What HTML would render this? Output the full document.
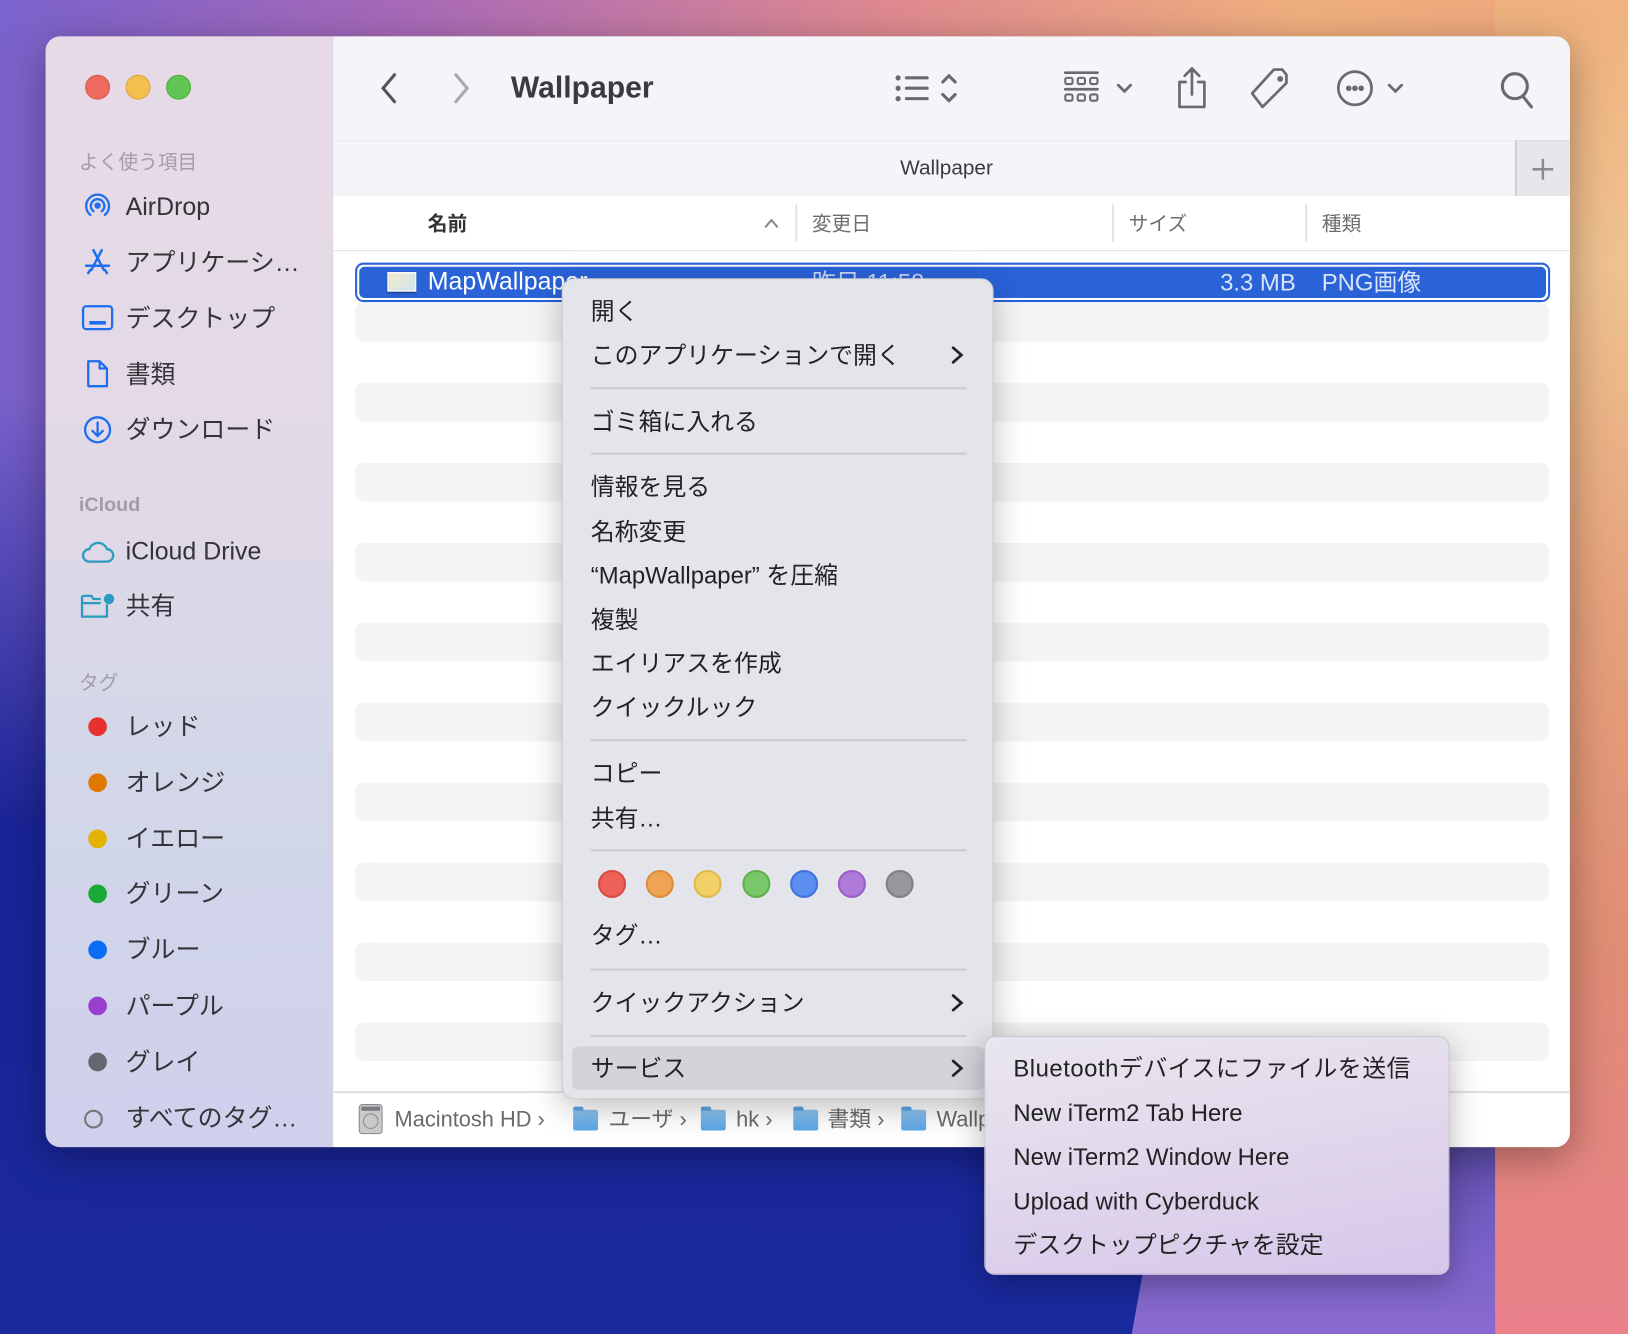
<!DOCTYPE html>
<html><head><meta charset="utf-8">
<style>
*{margin:0;padding:0;box-sizing:border-box}
html,body{width:1628px;height:1334px;overflow:hidden}
body{font-family:"Liberation Sans","Noto Sans CJK JP",sans-serif;}
#s{position:absolute;left:0;top:0;width:1568px;height:1285px;transform:scale(1.03827,1.03813);transform-origin:0 0;overflow:hidden;
background:
linear-gradient(180deg,rgba(0,0,0,0) 0,rgba(0,0,0,0) 380px,rgba(25,35,150,1) 800px,#1a2a9e 100%),
linear-gradient(90deg,#7a62cc 0,#a86ab8 25%,#e08a90 55%,#f0b07e 80%,#eea57e 100%);}
.a{position:absolute}
.win{left:44px;top:35px;width:1468px;height:1070px;border-radius:14px;overflow:hidden;background:#fff;box-shadow:0 10px 40px rgba(0,0,0,.35)}
.side{left:0;top:0;width:277px;height:1070px;background:linear-gradient(180deg,#e7dae6 0,#e2d9e7 40%,#d2d7e8 65%,#cfd0ec 100%);border-right:1px solid #d5d0da}
.tl{width:24px;height:24px;border-radius:50%;top:37px}
.sh{font-size:19px;color:#a39da8;left:32px}
.si{font-size:24px;color:#333338;left:77px;line-height:30px}
.dot{width:18px;height:18px;border-radius:50%;left:41px}
.main{left:277px;top:0;width:1191px;height:1070px}
.tb{left:0;top:0;width:1191px;height:154px;background:#f5f4f8;border-bottom:1px solid #dcdbe0}
.hd{font-size:19px;color:#6d6d72;top:166px}
.stripe{left:21px;width:1150px;height:37px;border-radius:8px;background:#f3f4f4}
.menu{left:541px;top:268px;width:416px;height:791px;background:#e4e5ea;border-radius:12px;border:1px solid #c9c9cf;box-shadow:0 8px 30px rgba(0,0,0,.25)}
.mi{left:27px;font-size:23px;color:#222;line-height:30px}
.sep{left:27px;width:362px;height:2px;background:#cbcbd0}
.cd{width:27px;height:27px;border-radius:50%;top:569px}
.sub{left:948px;top:998px;width:448px;height:230px;border-radius:10px;background:linear-gradient(170deg,#e9e6ee 0,#e2d9ec 45%,#d6c6ea 100%);border:1px solid #c9c4d6;box-shadow:0 8px 30px rgba(0,0,0,.3);overflow:hidden}
.su{left:27px;font-size:23px;color:#222;line-height:30px}
.pb{font-size:21px;color:#6a6a6e;top:1030px;line-height:28px}
.fold{width:24px;height:20px;border-radius:2px;background:linear-gradient(#8ec4ef,#5aa4e6);top:1034px}
.fold:before{content:"";position:absolute;left:0;top:-3px;width:10px;height:4px;background:#5aa4e6;border-radius:2px 2px 0 0}
</style></head><body><div id="s">
<div class="a" style="left:1090px;top:1080px;width:370px;height:205px;background:linear-gradient(180deg,#5a4aa8,#7a62c8 60%,#8a6ad0);clip-path:polygon(10% 0,95% 0,100% 100%,0 100%)"></div>
<div class="a" style="left:1440px;top:0;width:128px;height:1285px;background:linear-gradient(180deg,#f0b27e 0,#efc290 20%,#e6a27c 45%,#e08e74 70%,#e9808a 100%)"></div>
<div class="a win">
 <div class="a side">
  <div class="a tl" style="left:38px;background:#ee6a5f;border:1px solid #d9564c"></div>
  <div class="a tl" style="left:77px;background:#f5bf4f;border:1px solid #dca43a"></div>
  <div class="a tl" style="left:116px;background:#61c554;border:1px solid #4aad3f"></div>
  <div class="a sh" style="top:107px">よく使う項目</div>
  <svg class="a" style="left:36px;top:149px" width="28" height="30" viewBox="0 0 28 30" fill="none" stroke="#1e6ef0" stroke-width="2.2" stroke-linecap="round"><path d="M7 23A11 11 0 1 1 21 23"/><path d="M10 19.5A6.5 6.5 0 1 1 18 19.5"/><circle cx="14" cy="14" r="2" fill="#1e6ef0"/></svg>
  <div class="a si" style="top:150px">AirDrop</div>
  <svg class="a" style="left:36px;top:203px" width="28" height="28" viewBox="0 0 28 28" fill="none" stroke="#1e6ef0" stroke-width="2.4" stroke-linecap="round"><path d="M10 3L20 22M18 3L8 22M3 18H25M5 25L7 22M23 25L21 22"/></svg>
  <div class="a si" style="top:204px">アプリケーシ…</div>
  <svg class="a" style="left:34px;top:258px" width="32" height="26" viewBox="0 0 32 26" fill="none" stroke="#1e6ef0" stroke-width="2.2"><rect x="2" y="2" width="28" height="22" rx="3"/><path d="M8 18H24" stroke-width="3.5"/></svg>
  <div class="a si" style="top:258px">デスクトップ</div>
  <svg class="a" style="left:38px;top:310px" width="24" height="30" viewBox="0 0 24 30" fill="none" stroke="#1e6ef0" stroke-width="2.2" stroke-linejoin="round"><path d="M3 3H14L21 10V27H3Z"/><path d="M14 3V10H21"/></svg>
  <div class="a si" style="top:312px">書類</div>
  <svg class="a" style="left:36px;top:365px" width="28" height="28" viewBox="0 0 28 28" fill="none" stroke="#1e6ef0" stroke-width="2.2" stroke-linecap="round"><circle cx="14" cy="14" r="12"/><path d="M14 7V20M9 15L14 20L19 15"/></svg>
  <div class="a si" style="top:365px">ダウンロード</div>
  <div class="a sh" style="top:441px;font-weight:bold">iCloud</div>
  <svg class="a" style="left:33px;top:484px" width="34" height="24" viewBox="0 0 34 24" fill="none" stroke="#2a9cbf" stroke-width="2.2"><path d="M9 22H26A6 6 0 0 0 26 10A9 9 0 0 0 9 10A6 6 0 0 0 9 22Z"/></svg>
  <div class="a si" style="top:482px">iCloud Drive</div>
  <svg class="a" style="left:33px;top:534px" width="34" height="28" viewBox="0 0 34 28" fill="none" stroke="#2a9cbf" stroke-width="2.2"><path d="M2 5V25H26V13M2 5H11L13 8H20M2 12H20"/><circle cx="28" cy="8" r="5" fill="#2a9cbf" stroke="none"/></svg>
  <div class="a si" style="top:535px">共有</div>
  <div class="a sh" style="top:608px">タグ</div>
  <div class="a dot" style="top:656px;background:#e8312f"></div><div class="a si" style="top:651px">レッド</div>
  <div class="a dot" style="top:710px;background:#e07800"></div><div class="a si" style="top:705px">オレンジ</div>
  <div class="a dot" style="top:764px;background:#e4b200"></div><div class="a si" style="top:759px">イエロー</div>
  <div class="a dot" style="top:817px;background:#1aa936"></div><div class="a si" style="top:812px">グリーン</div>
  <div class="a dot" style="top:871px;background:#0a6cf5"></div><div class="a si" style="top:866px">ブルー</div>
  <div class="a dot" style="top:925px;background:#9a3ed0"></div><div class="a si" style="top:920px">パープル</div>
  <div class="a dot" style="top:979px;background:#67676f"></div><div class="a si" style="top:974px">グレイ</div>
  <svg class="a" style="left:36px;top:1033px" width="28" height="20" viewBox="0 0 28 20" fill="none" stroke="#777" stroke-width="2"><circle cx="10" cy="10" r="8"/><path d="M14 3A8 8 0 0 1 14 17"/></svg>
  <div class="a si" style="top:1028px">すべてのタグ…</div>
 </div>
 <div class="a main">
  <div class="a tb">
   <svg class="a" style="left:43px;top:34px" width="22" height="32" viewBox="0 0 22 32" fill="none" stroke="#555" stroke-width="3" stroke-linecap="round"><path d="M16 3L5 16L16 29"/></svg>
   <svg class="a" style="left:112px;top:34px" width="22" height="32" viewBox="0 0 22 32" fill="none" stroke="#aaa" stroke-width="3" stroke-linecap="round"><path d="M6 3L17 16L6 29"/></svg>
   <div class="a" style="left:171px;top:34px;font-size:29px;font-weight:bold;color:#3b3b3f">Wallpaper</div>
   <svg class="a" style="left:540px;top:34px" width="80" height="34" viewBox="0 0 80 34" fill="none" stroke="#6a6a6e" stroke-width="3" stroke-linecap="round"><circle cx="4" cy="6" r="1" fill="#6a6a6e"/><circle cx="4" cy="16" r="1" fill="#6a6a6e"/><circle cx="4" cy="26" r="1" fill="#6a6a6e"/><path d="M12 6H32M12 16H32M12 26H32M47 10L53 4L59 10M47 22L53 28L59 22"/></svg>
   <svg class="a" style="left:702px;top:32px" width="80" height="38" viewBox="0 0 80 38" fill="none" stroke="#6a6a6e" stroke-width="2.6" stroke-linecap="round"><path d="M3 3H34M3 19H34"/><rect x="3" y="8" width="7" height="6" rx="1.5" stroke-width="2"/><rect x="15" y="8" width="7" height="6" rx="1.5" stroke-width="2"/><rect x="27" y="8" width="7" height="6" rx="1.5" stroke-width="2"/><rect x="3" y="24" width="7" height="6" rx="1.5" stroke-width="2"/><rect x="15" y="24" width="7" height="6" rx="1.5" stroke-width="2"/><rect x="27" y="24" width="7" height="6" rx="1.5" stroke-width="2"/><path d="M54 15L60 21L66 15"/></svg>
   <svg class="a" style="left:810px;top:28px" width="34" height="44" viewBox="0 0 34 44" fill="none" stroke="#6a6a6e" stroke-width="2.6" stroke-linecap="round" stroke-linejoin="round"><path d="M11 16H5V40H29V16H23M17 28V3M10 10L17 3L24 10"/></svg>
   <svg class="a" style="left:881px;top:28px" width="44" height="44" viewBox="0 0 44 44" fill="none" stroke="#6a6a6e" stroke-width="2.6" stroke-linejoin="round"><path d="M25 4H33L37 9V17L14 40L4 27Z"/><circle cx="31" cy="13" r="1.5" fill="#6a6a6e"/></svg>
   <svg class="a" style="left:964px;top:30px" width="80" height="40" viewBox="0 0 80 40" fill="none" stroke="#6a6a6e" stroke-width="2.6" stroke-linecap="round"><circle cx="20" cy="20" r="16"/><circle cx="14" cy="20" r="1.4" fill="#6a6a6e"/><circle cx="20" cy="20" r="1.4" fill="#6a6a6e"/><circle cx="26" cy="20" r="1.4" fill="#6a6a6e"/><path d="M53 17L59 23L65 17"/></svg>
   <svg class="a" style="left:1122px;top:32px" width="38" height="40" viewBox="0 0 38 40" fill="none" stroke="#6a6a6e" stroke-width="3" stroke-linecap="round"><circle cx="16" cy="16" r="12"/><path d="M24 26L32 36"/></svg>
   <div class="a" style="left:0;top:100px;width:1138px;height:54px;background:#f5f4f8;border-top:1px solid #e8e7ec"></div>
   <div class="a" style="left:546px;top:116px;font-size:20px;color:#3b3b3f">Wallpaper</div>
   <div class="a" style="left:1138px;top:100px;width:53px;height:54px;background:#e7e6eb;border-left:2px solid #cfcfd4;border-top:1px solid #dcdbe0"></div>
   <svg class="a" style="left:1153px;top:116px" width="24" height="24" viewBox="0 0 24 24" stroke="#8a8a8e" stroke-width="2.4"><path d="M12 2V22M2 12H22"/></svg>
  </div>
  <div class="a" style="left:0;top:154px;width:1191px;height:53px;background:#fff;border-bottom:1px solid #e1e1e3"></div>
  <div class="a hd" style="left:91px;color:#333;font-weight:bold">名前</div>
  <svg class="a" style="left:414px;top:174px" width="16" height="12" viewBox="0 0 16 12" fill="none" stroke="#888" stroke-width="2"><path d="M2 10L8 3L14 10"/></svg>
  <div class="a" style="left:445px;top:162px;width:2px;height:36px;background:#e3e3e5"></div>
  <div class="a hd" style="left:461px">変更日</div>
  <div class="a" style="left:750px;top:162px;width:2px;height:36px;background:#e3e3e5"></div>
  <div class="a hd" style="left:766px">サイズ</div>
  <div class="a" style="left:936px;top:162px;width:2px;height:36px;background:#e3e3e5"></div>
  <div class="a hd" style="left:952px">種類</div>
  <div class="a stripe" style="top:257px"></div>
  <div class="a stripe" style="top:334px"></div>
  <div class="a stripe" style="top:411px"></div>
  <div class="a stripe" style="top:488px"></div>
  <div class="a stripe" style="top:565px"></div>
  <div class="a stripe" style="top:642px"></div>
  <div class="a stripe" style="top:719px"></div>
  <div class="a stripe" style="top:796px"></div>
  <div class="a stripe" style="top:873px"></div>
  <div class="a stripe" style="top:950px"></div>
  <div class="a" style="left:21px;top:218px;width:1151px;height:38px;border-radius:8px;border:2px solid #2a62d8;background:#fff"></div>
  <div class="a" style="left:25px;top:222px;width:1143px;height:30px;border-radius:5px;background:#2a62d8"></div>
  <div class="a" style="left:52px;top:227px;width:28px;height:19px;background:linear-gradient(135deg,#f2ecc8,#cfe4ee);border:2px solid #f4f4f4;box-shadow:0 1px 2px rgba(0,0,0,.4)"></div>
  <div class="a" style="left:91px;top:222px;font-size:24px;color:#fff;line-height:30px">MapWallpaper</div>
  <div class="a" style="left:461px;top:222px;font-size:23px;color:#c8d6f5;line-height:30px">昨日 11:58</div>
  <div class="a" style="left:790px;top:222px;width:137px;text-align:right;font-size:23px;color:#d8e2f8;line-height:30px">3.3 MB</div>
  <div class="a" style="left:952px;top:222px;font-size:23px;color:#d8e2f8;line-height:30px">PNG画像</div>
  <div class="a" style="left:0;top:1016px;width:1191px;height:54px;background:#fff;border-top:2px solid #e1e1e3"></div>
  <svg class="a" style="left:24px;top:1028px" width="24" height="30" viewBox="0 0 24 30"><rect x="1" y="1" width="22" height="28" rx="3" fill="#c9c9cc" stroke="#8a8a8e"/><circle cx="12" cy="17" r="7" fill="none" stroke="#8a8a8e"/><rect x="3" y="3" width="18" height="4" fill="#7a7a7e"/></svg>
  <div class="a pb" style="left:59px">Macintosh HD ›</div>
  <div class="a fold" style="left:231px"></div><div class="a pb" style="left:265px">ユーザ ›</div>
  <div class="a fold" style="left:354px"></div><div class="a pb" style="left:388px">hk ›</div>
  <div class="a fold" style="left:443px"></div><div class="a pb" style="left:476px">書類 ›</div>
  <div class="a fold" style="left:547px"></div><div class="a pb" style="left:581px">Wallpaper</div>
 </div>
</div>

<div class="a menu">
 <div class="a mi" style="top:16px">開く</div>
 <div class="a mi" style="top:58px">このアプリケーションで開く</div>
 <svg class="a" style="left:373px;top:63px" width="14" height="20" viewBox="0 0 14 20" fill="none" stroke="#222" stroke-width="2.6" stroke-linecap="round"><path d="M3 3L11 10L3 17"/></svg>
 <div class="a sep" style="top:104px"></div>
 <div class="a mi" style="top:122px">ゴミ箱に入れる</div>
 <div class="a sep" style="top:167px"></div>
 <div class="a mi" style="top:185px">情報を見る</div>
 <div class="a mi" style="top:228px">名称変更</div>
 <div class="a mi" style="top:270px">“MapWallpaper” を圧縮</div>
 <div class="a mi" style="top:313px">複製</div>
 <div class="a mi" style="top:355px">エイリアスを作成</div>
 <div class="a mi" style="top:397px">クイックルック</div>
 <div class="a sep" style="top:443px"></div>
 <div class="a mi" style="top:461px">コピー</div>
 <div class="a mi" style="top:504px">共有…</div>
 <div class="a sep" style="top:549px"></div>
 <div class="a cd" style="left:34px;background:#ec6259;border:2px solid #d84a42"></div>
 <div class="a cd" style="left:80px;background:#eea355;border:2px solid #dc8c3a"></div>
 <div class="a cd" style="left:126px;background:#f2d068;border:2px solid #e0b94a"></div>
 <div class="a cd" style="left:173px;background:#78c86b;border:2px solid #5cb14f"></div>
 <div class="a cd" style="left:219px;background:#5b8ef0;border:2px solid #3f72e0"></div>
 <div class="a cd" style="left:265px;background:#b07ad8;border:2px solid #9a5ec8"></div>
 <div class="a cd" style="left:311px;background:#98989c;border:2px solid #808084"></div>
 <div class="a mi" style="top:617px">タグ…</div>
 <div class="a sep" style="top:664px"></div>
 <div class="a mi" style="top:682px">クイックアクション</div>
 <svg class="a" style="left:373px;top:687px" width="14" height="20" viewBox="0 0 14 20" fill="none" stroke="#222" stroke-width="2.6" stroke-linecap="round"><path d="M3 3L11 10L3 17"/></svg>
 <div class="a sep" style="top:728px"></div>
 <div class="a" style="left:9px;top:739px;width:397px;height:42px;border-radius:6px;background:#d3d4da"></div>
 <div class="a mi" style="top:745px">サービス</div>
 <svg class="a" style="left:373px;top:750px" width="14" height="20" viewBox="0 0 14 20" fill="none" stroke="#222" stroke-width="2.6" stroke-linecap="round"><path d="M3 3L11 10L3 17"/></svg>
</div>

<div class="a sub">
 <div class="a su" style="top:15px;letter-spacing:.5px">Bluetoothデバイスにファイルを送信</div>
 <div class="a su" style="top:58px">New iTerm2 Tab Here</div>
 <div class="a su" style="top:100px">New iTerm2 Window Here</div>
 <div class="a su" style="top:143px">Upload with Cyberduck</div>
 <div class="a su" style="top:185px">デスクトップピクチャを設定</div>
</div>
</div></body></html>
